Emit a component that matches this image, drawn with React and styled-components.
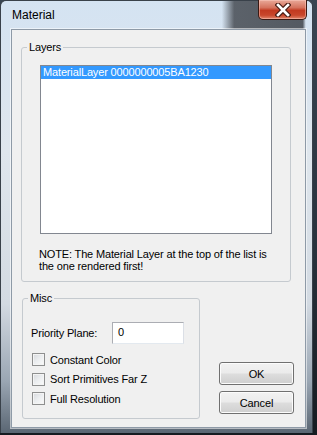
import React from "react";
import styled, { createGlobalStyle } from "styled-components";

const Global = createGlobalStyle`
  html, body { margin: 0; padding: 0; background: #1d242c; }
  body { font-family: "Liberation Sans", Arial, sans-serif; font-size: 11px; letter-spacing: -0.15px; color: #000; }
`;

const Desktop = styled.div`
  width: 317px;
  height: 435px;
  overflow: hidden;
  background: linear-gradient(to bottom, #3a4653 0%, #27303a 60%, #161b21 100%);
`;

const Window = styled.div`
  width: 313px;
  height: 433px;
  box-sizing: border-box;
  display: flex;
  flex-direction: column;
  border: 1px solid #39414a;
  border-bottom: 0;
  border-radius: 6px 6px 0 0;
  background: linear-gradient(to bottom, #d4e3f2 0%, #dfe6ed 35%, #d3dae2 70%, #9aa6b3 88%, #5a6673 100%);
`;

const TitleBar = styled.div`
  height: 28px;
  display: flex;
  align-items: flex-start;
  padding-left: 11px;
  background: linear-gradient(to right, transparent 0%, transparent 71%, rgba(70,75,82,0.85) 75%, rgba(70,75,82,0.9) 97%, transparent 98%);
  border-radius: 5px 5px 0 0;
`;

const Title = styled.span`
  font-size: 12px;
  letter-spacing: 0;
  line-height: 15px;
  margin-top: 7px;
  color: #000;
`;

const CloseButton = styled.div`
  margin-left: auto;
  margin-right: 5px;
  margin-top: -1px;
  width: 49px;
  height: 20px;
  box-sizing: border-box;
  border: 1px solid #3b1a14;
  border-top: 0;
  border-radius: 0 0 5px 5px;
  background: linear-gradient(to bottom, #e9a999 0%, #d5735e 40%, #c23a21 55%, #c8472c 80%, #e1866c 100%);
  box-shadow: inset 0 0 0 1px rgba(255, 210, 200, 0.45);
  display: flex;
  align-items: center;
  justify-content: center;
`;

const Client = styled.div`
  flex: 1;
  margin: 0 6px 5px 10px;
  border: 1px solid #8e9aa7;
  box-shadow: 0 0 0 1px rgba(255, 255, 255, 0.55);
  background: #f0f0f0;
  display: flex;
  flex-direction: column;
  padding: 0 0 8px 0;
`;

const Group = styled.div`
  position: relative;
  margin: ${(p) => p.$top}px 0 0 ${(p) => p.$left}px;
  width: ${(p) => p.$width}px;
  box-sizing: border-box;
  border: 1px solid #c5cacf;
  border-radius: 3px;
`;

const GroupTitle = styled.span`
  position: absolute;
  top: -7px;
  left: 5px;
  padding: 0 2px;
  line-height: 13px;
  background: #f0f0f0;
`;

const LayersInner = styled.div`
  padding: 17px 18px 9px 18px;
  display: flex;
  flex-direction: column;
`;

const ListBox = styled.div`
  height: 169px;
  box-sizing: border-box;
  border: 1px solid #828790;
  background: #fff;
`;

const ListItem = styled.div`
  height: 13px;
  line-height: 13px;
  padding-left: 2px;
  background: ${(p) => (p.$selected ? "#3399ff" : "transparent")};
  color: ${(p) => (p.$selected ? "#fff" : "#000")};
  white-space: nowrap;
`;

const Note = styled.p`
  margin: 14px 0 0 -1px;
  line-height: 12px;
  white-space: nowrap;
`;

const BottomRow = styled.div`
  display: flex;
  align-items: flex-end;
`;

const MiscInner = styled.div`
  padding: 23px 0 13px 8px;
  display: flex;
  flex-direction: column;
`;

const FieldRow = styled.div`
  display: flex;
  align-items: center;
  height: 22px;
`;

const FieldLabel = styled.span`
  width: 81px;
`;

const TextInput = styled.div`
  width: 72px;
  height: 22px;
  box-sizing: border-box;
  border: 1px solid #abadb3;
  border-right-color: #dbdfe6;
  border-bottom-color: #e3e9ef;
  background: #fff;
  padding-left: 5px;
  line-height: 19px;
`;

const Checks = styled.div`
  margin-top: 9px;
  display: flex;
  flex-direction: column;
  gap: 6.5px;
`;

const CheckRow = styled.label`
  display: flex;
  align-items: center;
  height: 13px;
  gap: 5px;
  padding-left: 1px;
`;

const CheckBox = styled.span`
  width: 13px;
  height: 13px;
  box-sizing: border-box;
  border: 1px solid #8e8f8f;
  background: linear-gradient(135deg, #d6d8dc 0%, #eceef0 50%, #fbfbfb 100%);
  box-shadow: inset 0 0 0 1px #f4f4f4;
`;

const Buttons = styled.div`
  margin: 0 0 5px 19px;
  display: flex;
  flex-direction: column;
  gap: 6px;
`;

const Button = styled.div`
  width: 75px;
  height: 23px;
  box-sizing: border-box;
  border: 1px solid #707070;
  border-radius: 3px;
  background: linear-gradient(to bottom, #f2f2f2 0%, #ebebeb 48%, #dddddd 52%, #cfcfcf 100%);
  box-shadow: inset 0 0 0 1px #fcfcfc;
  display: flex;
  align-items: center;
  justify-content: center;
`;

export default function App() {
  return (
    <>
      <Global />
      <Desktop>
        <Window>
          <TitleBar>
            <Title>Material</Title>
            <CloseButton>
              <svg width="16" height="14" viewBox="0 0 16 14">
                <path d="M3 2 L13 12 M13 2 L3 12" stroke="#4a1d15" strokeWidth="5" strokeLinecap="square" />
                <path d="M3 2 L13 12 M13 2 L3 12" stroke="#fff" strokeWidth="2.6" strokeLinecap="square" />
              </svg>
            </CloseButton>
          </TitleBar>
          <Client>
            <Group $top={17} $left={9} $width={270}>
              <GroupTitle>Layers</GroupTitle>
              <LayersInner>
                <ListBox>
                  <ListItem $selected>MaterialLayer 0000000005BA1230</ListItem>
                </ListBox>
                <Note>
                  NOTE: The Material Layer at the top of the list is
                  <br />
                  the one rendered first!
                </Note>
              </LayersInner>
            </Group>
            <BottomRow>
              <Group $top={16} $left={10} $width={178}>
                <GroupTitle>Misc</GroupTitle>
                <MiscInner>
                  <FieldRow>
                    <FieldLabel>Priority Plane:</FieldLabel>
                    <TextInput>0</TextInput>
                  </FieldRow>
                  <Checks>
                    <CheckRow><CheckBox />Constant Color</CheckRow>
                    <CheckRow><CheckBox />Sort Primitives Far Z</CheckRow>
                    <CheckRow><CheckBox />Full Resolution</CheckRow>
                  </Checks>
                </MiscInner>
              </Group>
              <Buttons>
                <Button>OK</Button>
                <Button>Cancel</Button>
              </Buttons>
            </BottomRow>
          </Client>
        </Window>
      </Desktop>
    </>
  );
}
